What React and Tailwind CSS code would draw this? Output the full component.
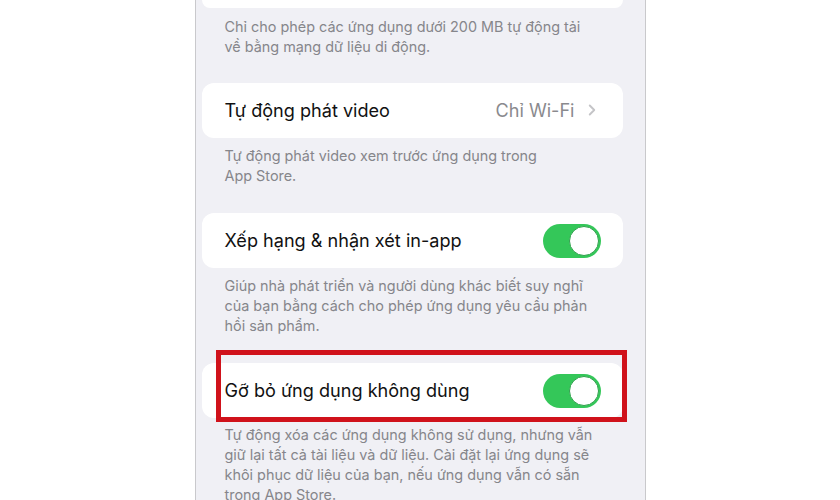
import React from 'react'
import { ChevronRight } from 'lucide-react'

const Caption = ({ lines, className = '' }) => (
  <div className={`pl-[23px] text-[14.4px] leading-[20px] text-[#86868b] ${className}`}>
    {lines.map((l, i) => (
      <div key={i} className="whitespace-nowrap">{l}</div>
    ))}
  </div>
)

const Toggle = () => (
  <div className="w-[58px] h-[34px] rounded-full bg-[#34c759] p-[2px] flex justify-end">
    <div className="w-[30px] h-[30px] rounded-full bg-white border border-[#2fa14c]" />
  </div>
)

const Row = ({ label, children }) => (
  <div className="bg-white rounded-[12px] h-[55px] pl-[23px] pr-[22px] flex items-center justify-between">
    <span className="text-[18.1px] text-[#111]">{label}</span>
    {children}
  </div>
)

export default function App() {
  return (
    <div className="w-[840px] h-[500px] bg-white flex justify-center overflow-hidden" style={{ fontFamily: 'Inter, "Noto Sans", sans-serif' }}>
      <div className="w-[451px] h-[500px] bg-[#f0f0f5] border-x border-[#c9c9cc] pl-[6px] pr-[22px] relative">
        <div className="bg-white h-[8px] rounded-b-[12px]" />
        <Caption
          className="mt-[9px]"
          lines={['Chỉ cho phép các ứng dụng dưới 200 MB tự động tải', 'về bằng mạng dữ liệu di động.']}
        />

        <div className="mt-[26px]">
          <Row label="Tự động phát video">
            <div className="flex items-center gap-[8px] text-[18.1px] text-[#8a8a8e]">
              <span>Chỉ Wi-Fi</span>
              <ChevronRight className="w-[18px] h-[18px] text-[#c4c4c7]" strokeWidth={2.5} />
            </div>
          </Row>
        </div>
        <Caption
          className="mt-[8px]"
          lines={['Tự động phát video xem trước ứng dụng trong', 'App Store.']}
        />

        <div className="mt-[27px]">
          <Row label="Xếp hạng & nhận xét in-app">
            <Toggle />
          </Row>
        </div>
        <Caption
          className="mt-[8px]"
          lines={[
            'Giúp nhà phát triển và người dùng khác biết suy nghĩ',
            'của bạn bằng cách cho phép ứng dụng yêu cầu phản',
            'hồi sản phẩm.',
          ]}
        />

        <div className="mt-[27px]">
          <Row label="Gỡ bỏ ứng dụng không dùng">
            <Toggle />
          </Row>
        </div>
        <Caption
          className="mt-[7px]"
          lines={[
            'Tự động xóa các ứng dụng không sử dụng, nhưng vẫn',
            'giữ lại tất cả tài liệu và dữ liệu. Cài đặt lại ứng dụng sẽ',
            'khôi phục dữ liệu của bạn, nếu ứng dụng vẫn có sẵn',
            'trong App Store.',
          ]}
        />

        <div className="absolute left-[20px] top-[350px] w-[411px] h-[72px] border-[5px] border-[#d0121b]" />
      </div>
    </div>
  )
}
